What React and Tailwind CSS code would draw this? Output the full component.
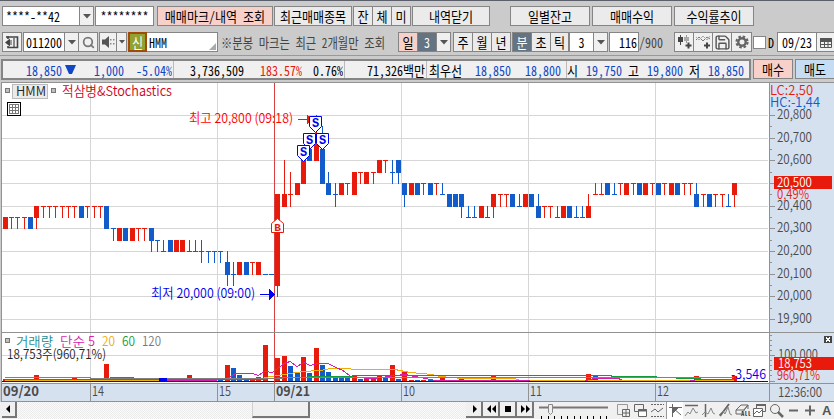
import { Search, Save } from "lucide-react";
import clsx from "clsx";

const RED = "#e81a0c";
const BLUE = "#125bcb";

// [color, top, bottom, high, low], prices as offset from 20,000
const r = (top, bottom, high = top, low = bottom) => [RED, top, bottom, high, low];
const b = (top, bottom, high = top, low = bottom) => [BLUE, top, bottom, high, low];

const CANDLES = [
  r(350, 300), r(350, 350, 350, 300), r(350, 350, 350, 300), r(350, 350, 350, 300), b(350, 300),
  r(400, 350, 400, 300), r(400, 400, 400, 350), r(400, 400, 400, 350), r(400, 400, 400, 350), r(400, 400, 400, 350),
  r(400, 400, 400, 350), r(400, 400, 400, 350), b(400, 350), r(400, 400, 400, 350), r(400, 400, 400, 350),
  r(400, 400, 400, 350), b(400, 300), b(300, 300, 300, 250), r(300, 250), b(300, 250),
  r(300, 250), r(300, 300, 300, 250), r(300, 300, 300, 250), b(300, 250, 300, 200), b(250, 250, 250, 200),
  b(200, 200, 250, 200), b(250, 200), r(250, 200), r(250, 200), b(200, 200, 250, 200),
  b(200, 200, 250, 200), b(200, 200, 250, 150), b(200, 200, 200, 150), b(200, 200, 200, 150), b(200, 200, 200, 150),
  b(150, 100, 200, 50), b(100, 100, 150, 50), r(150, 100), b(150, 100), r(150, 150, 150, 100),
  r(150, 100), b(100, 100), b(100, 100), r(450, 50, 450, 0), r(450, 400, 600, 400),
  r(450, 450, 550, 400), r(500, 450), r(600, 500), b(650, 600), r(700, 600, 800, 600),
  b(650, 500, 750, 500), b(500, 450, 550, 450), b(450, 450, 500, 400), r(500, 450), r(500, 500, 500, 450),
  r(550, 450), r(550, 550, 550, 500), r(550, 500), r(550, 550, 550, 500), r(600, 550),
  r(600, 600, 600, 550), b(550, 550, 600, 500), b(600, 550, 600, 500), b(500, 450, 500, 400), r(500, 450),
  b(500, 450), r(500, 500, 500, 450), b(500, 450), r(500, 500, 500, 450), b(450, 450, 500, 450),
  b(450, 400), b(450, 400), b(450, 400, 450, 350), b(350, 350, 400, 350), b(350, 350, 400, 350),
  r(400, 350), b(350, 350, 400, 350), r(450, 400, 450, 350), r(450, 450, 450, 400), r(450, 450, 450, 400),
  b(450, 400), b(400, 400, 450, 400), r(450, 400), b(450, 400), b(400, 350, 450, 350),
  r(400, 400, 400, 350), r(400, 400, 400, 350), b(350, 350, 400, 350), r(400, 350), b(400, 350),
  b(350, 350, 400, 350), b(350, 350, 400, 350), r(400, 350, 450, 350), r(450, 450, 500, 450), r(450, 450, 500, 450),
  b(500, 450), b(450, 450, 500, 450), r(500, 500, 500, 450), r(500, 450), r(500, 500, 500, 450),
  b(500, 450), r(500, 450), r(500, 500, 500, 450), b(500, 450), r(500, 500, 500, 450),
  r(500, 450), b(500, 450), r(500, 500, 500, 450), r(500, 500, 500, 450), b(450, 400, 500, 400),
  r(450, 450, 450, 400), b(450, 400), r(450, 450, 450, 400), r(450, 450, 450, 400), b(400, 400, 450, 400),
  r(500, 450, 500, 400),
];

// tall volume bars, every other bar is one pixel high
const VOLUMES = {
  0: 2, 5: 6, 11: 3, 16: 17, 29: 6, 35: 16, 36: 13, 37: 6, 40: 4, 41: 36, 42: 0, 43: 23, 44: 25, 45: 15, 46: 9,
  47: 24, 48: 8, 49: 33, 50: 16, 51: 9, 52: 4, 53: 4, 54: 3, 55: 6, 56: 2, 57: 4, 58: 3, 59: 5, 60: 3, 61: 16,
  62: 2, 63: 10, 69: 4, 72: 4, 77: 5, 92: 7, 93: 5, 109: 5, 115: 5,
};
const RED_VOLUMES = [16, 29, 35, 40, 41, 47, 55, 57, 58, 61, 63, 69, 72, 109];
const BLUE_VOLUMES = [36, 37, 45, 46, 48, 53, 54, 56, 60, 62, 93];

const LEVELS = [800, 700, 600, 500, 400, 300, 200, 100, 0, -100];
const HOURS = [90, 217, 401, 528, 655];

const xOf = (i) => Math.floor(5.2 + 6.344 * i);
const yOf = (p) => Math.round(115 + (800 - p) * 0.2267);

function T({ x, y, w, children, fill = "#4a4a4a", size = 13.5, weight = 350 }) {
  return (
    <text x={x} y={y} textLength={w} lengthAdjust="spacingAndGlyphs" fill={fill} fontSize={size} fontWeight={weight}>
      {children}
    </text>
  );
}

function Label({ children, className }) {
  return <span className={clsx("inline-block scale-y-[1.14] whitespace-pre leading-none", className)}>{children}</span>;
}

function Box({ children, className }) {
  return (
    <div className={clsx("flex h-5 shrink-0 items-center justify-center overflow-hidden border border-[#858585] [&>svg]:shrink-0", className)}>
      {children}
    </div>
  );
}

function Drop({ className }) {
  return (
    <Box className={clsx("bg-[#f0f0f0]", className)}>
      <svg width="8" height="5" viewBox="0 0 8 5">
        <path d="M0 0h8L4 4.5z" fill="#555" />
      </svg>
    </Box>
  );
}

function AccountRow() {
  return (
    <div className="flex h-5 w-full">
      <Box className="ml-[2px] w-[78px] justify-start bg-white pl-[3px]"><Label>****-**42</Label></Box>
      <Drop className="w-[14px] border-l-0" />
      <Box className="ml-px w-[59px] bg-white"><Label>********</Label></Box>
      <Box className="ml-[3px] w-[116px] bg-[#f7d0ca]"><Label>매매마크/내역 조회</Label></Box>
      <Box className="ml-px w-[78px] bg-[#ebebeb]"><Label>최근매매종목</Label></Box>
      <Box className="ml-px w-[20px] bg-[#ebebeb]"><Label>잔</Label></Box>
      <Box className="w-[19px] border-l-0 bg-[#ebebeb]"><Label>체</Label></Box>
      <Box className="w-[19px] border-l-0 bg-[#ebebeb]"><Label>미</Label></Box>
      <Box className="ml-px w-[78px] bg-[#ebebeb]"><Label>내역닫기</Label></Box>
      <Box className="ml-[20px] w-[80px] bg-[#ebebeb]"><Label>일별잔고</Label></Box>
      <Box className="ml-[2px] w-[80px] bg-[#ebebeb]"><Label>매매수익</Label></Box>
      <Box className="ml-[2px] w-[80px] bg-[#ebebeb]"><Label>수익률추이</Label></Box>
    </div>
  );
}

function SymbolRow() {
  return (
    <div className="flex h-5 w-full items-center">
      <Box className="ml-[2px] w-[20px] bg-[#f0f0f0]">
        <svg width="14" height="14" viewBox="0 0 14 14" fill="none" stroke="#444">
          <path d="M3 4V2h9.500v10.500H3V11" strokeWidth="1.600" />
          <path d="M1 2h3" strokeWidth="1.600" />
          <path d="M9 3v9" strokeWidth="1.200" />
          <path d="M0 7.500l5-4v8z" fill="#444" stroke="none" />
          <path d="M5 5h2v5H5z" fill="#999" stroke="none" />
        </svg>
      </Box>
      <Box className="ml-px w-[42px] bg-white"><Label>011200</Label></Box>
      <Drop className="w-[14px] border-l-0" />
      <Box className="w-[19px] border-l-0 bg-[#f0f0f0]"><Search size={13} color="#777" strokeWidth={3.2} /></Box>
      <Box className="ml-px w-[18px] bg-[#f0f0f0]">
        <svg width="14" height="12" viewBox="0 0 14 12" fill="#555">
          <path d="M1 3.500h3L8 0v12L4 8.500H1z" />
          <path d="M9 3h1.500v1.500H9zM9 7h1.500v1.500H9zM12 3h1.500v1.500H12zM12 7h1.500v1.500H12z" fill="#888" />
        </svg>
      </Box>
      <Box className="w-[10px] border-l-0 bg-[#f0f0f0]">
        <svg width="6" height="4" viewBox="0 0 6 4"><path d="M0 0h6L3 3.500z" fill="#555" /></svg>
      </Box>
      <div className="ml-px flex h-5 w-[19px] shrink-0 items-center justify-center border-2 border-[#a04a0c] bg-[#93a22f] text-white">
        <Label>신</Label>
      </div>
      <Box className="relative w-[71px] justify-start border-l-0 bg-white pl-[2px]">
        <Label>HMM</Label>
        <svg className="absolute right-px bottom-px" width="7" height="7" viewBox="0 0 7 7">
          <path d="M7 0v7H0z" fill="#aaa" />
        </svg>
      </Box>
      <div className="ml-[3px] w-[177px] shrink-0 text-[#444]"><Label className="origin-left scale-x-[0.94]">※분봉 마크는 최근 2개월만 조회</Label></div>
      <Box className="w-[20px] bg-[#f7d0ca]"><Label>일</Label></Box>
      <Box className="w-[19px] border-l-0 bg-[#647483] text-white"><Label>3</Label></Box>
      <Drop className="w-[14px] border-l-0" />
      <Box className="ml-[2px] w-[20px] bg-[#ebebeb]"><Label>주</Label></Box>
      <Box className="w-[19px] border-l-0 bg-[#ebebeb]"><Label>월</Label></Box>
      <Box className="w-[19px] border-l-0 bg-[#ebebeb]"><Label>년</Label></Box>
      <Box className="ml-px w-[20px] bg-[#647483] text-white"><Label>분</Label></Box>
      <Box className="w-[19px] border-l-0 bg-[#ebebeb]"><Label>초</Label></Box>
      <Box className="w-[18px] border-l-0 bg-[#ebebeb]"><Label>틱</Label></Box>
      <Box className="w-[25px] bg-white"><Label>3</Label></Box>
      <Drop className="w-[14px] border-l-0" />
      <Box className="ml-px w-[30px] justify-end bg-white pr-px"><Label>116</Label></Box>
      <div className="w-[35px] shrink-0 text-[#444]"><Label>/900</Label></div>
      <Box className="w-[20px] bg-[#f0f0f0]">
        <svg width="15" height="14" viewBox="0 0 15 14" fill="none" stroke="#444">
          <path d="M3.500 0v10" />
          <path d="M9.500 0v8" stroke="#999" />
          <path d="M1 2h5v5H1z" fill="#444" stroke="none" />
          <path d="M7 2h5v4H7z" fill="#aaa" stroke="none" />
          <path d="M8.500 10.500h6M11.500 7.500v6" strokeWidth="2" />
        </svg>
      </Box>
      <Box className="w-[19px] border-l-0 bg-[#f0f0f0]">
        <svg width="15" height="14" viewBox="0 0 15 14" fill="none" stroke="#777">
          <path d="M0 5l3-3 4 4 4-4 3 2" />
          <path d="M0 2l3 3 4-4 4 4 3-4" stroke="#aaa" />
          <path d="M8 10.500h6M11 7.500v6" stroke="#444" strokeWidth="2" />
        </svg>
      </Box>
      <Box className="w-[19px] border-l-0 bg-[#f0f0f0]"><Save size={17} color="#555" strokeWidth={2} /></Box>
      <Box className="w-[20px] border-l-0 bg-[#f0f0f0]">
        <svg width="14" height="14" viewBox="0 0 14 14" fill="none" stroke="#666">
          <circle cx="7" cy="7" r="5.500" strokeWidth="2.200" strokeDasharray="2.500 1.820" />
          <circle cx="7" cy="7" r="3.700" strokeWidth="2.400" />
        </svg>
      </Box>
      <div className="ml-px h-[13px] w-[13px] shrink-0 border border-[#858585] bg-white" />
      <div className="ml-[2px] w-[9px] shrink-0"><Label>D</Label></div>
      <Box className="w-[40px] bg-white"><Label>09/23</Label></Box>
      <Box className="w-[19px] border-l-0 bg-[#f0f0f0]">
        <svg width="12" height="11" viewBox="0 0 12 11" fill="none" stroke="#555">
          <path d="M.5 1.500h11v9H.5zM.5 4.500h11M.5 7.500h11M4.500 4v6M8 4v6" />
          <path d="M0 1h12v3H0z" fill="#555" stroke="none" />
        </svg>
      </Box>
    </div>
  );
}

function QuoteRow() {
  return (
    <div className="flex h-[21px] w-full text-[#0f47c4]">
      <div className="ml-px flex h-full w-[750px] shrink-0 items-center border-2 border-[#858585] bg-[#f0f0f0]">
        <div className="flex w-[59px] shrink-0 justify-end"><Label>18,850</Label></div>
        <svg className="ml-[3px] shrink-0" width="11" height="10" viewBox="0 0 11 10"><path d="M0 0h11L7 9H4z" fill="#0f47c4" /></svg>
        <div className="flex w-[48px] shrink-0 justify-end"><Label>1,000</Label></div>
        <div className="flex h-full w-[50px] shrink-0 items-center justify-end border-r border-[#bbb] pr-px"><Label>-5.04%</Label></div>
        <div className="flex w-[70px] shrink-0 justify-end text-black"><Label>3,736,509</Label></div>
        <div className="flex w-[58px] shrink-0 justify-end text-[#e81a0c]"><Label>183.57%</Label></div>
        <div className="flex h-full w-[43px] shrink-0 items-center justify-end border-r border-[#bbb] pr-px text-black"><Label>0.76%</Label></div>
        <div className="flex h-full w-[82px] shrink-0 items-center justify-end border-r border-[#bbb] pr-px text-black"><Label>71,326백만</Label></div>
        <div className="w-[48px] shrink-0 pl-[2px] text-black"><Label>최우선</Label></div>
        <div className="w-[50px] shrink-0"><Label>18,850</Label></div>
        <div className="flex h-full w-[42px] shrink-0 items-center border-r border-[#bbb]"><Label>18,800</Label></div>
        <div className="w-[19px] shrink-0 text-black"><Label>시</Label></div>
        <div className="w-[42px] shrink-0"><Label>19,750</Label></div>
        <div className="w-[19px] shrink-0 text-black"><Label>고</Label></div>
        <div className="w-[42px] shrink-0"><Label>19,800</Label></div>
        <div className="w-[19px] shrink-0 text-black"><Label>저</Label></div>
        <div className="shrink-0"><Label>18,850</Label></div>
      </div>
      <div className="ml-[2px] flex h-5 w-[40px] shrink-0 items-center justify-center border border-[#858585] bg-[#f7d0ca] text-black"><Label>매수</Label></div>
      <div className="ml-[2px] flex h-5 w-[40px] shrink-0 items-center justify-center border border-[#858585] bg-[#c5dcf2] text-black"><Label>매도</Label></div>
    </div>
  );
}

function SellMark({ x, y }) {
  return (
    <g>
      <path d={`M${x - 6} ${y}h12v10l-6 6l-6 -6z`} fill="#fff" stroke="#0000f0" />
      <text x={x} y={y + 10.5} textAnchor="middle" fontSize="12" fontWeight="700" fill="#0000f0" fontFamily="Liberation Mono, monospace">S</text>
    </g>
  );
}

function Chart() {
  return (
    <svg className="block shrink-0" width="834" height="322" viewBox="0 80 834 322" shapeRendering="crispEdges">
      <rect x="0" y="80" width="834" height="322" fill="#cbcbcb" />
      <rect x="1" y="82" width="769" height="302" fill="#fff" />
      <rect x="770" y="82" width="64" height="320" fill="#d6e1ef" />
      <rect x="1" y="384" width="833" height="18" fill="#d6e1ef" />

      {/* grid */}
      <g fill="#d6d6d6">
        {LEVELS.map((p) => <rect key={p} x="2" y={yOf(p)} width="766" height="1" />)}
        <rect x="2" y="355" width="766" height="1" />
        {HOURS.map((x) => <rect key={x} x={x} y="83" width="1" height="300" />)}
      </g>

      {/* volume */}
      {CANDLES.map((c, i) => {
        const h = VOLUMES[i] ?? 1;
        let fill = c[0];
        if (RED_VOLUMES.includes(i)) fill = RED;
        if (BLUE_VOLUMES.includes(i)) fill = BLUE;
        return <rect key={i} x={xOf(i) - 2} y={381 - h} width="5" height={h} fill={fill} />;
      })}
      <g fill="none" strokeWidth="1">
        <path d="M5 380.500H180V379.500H260L265 377.500 278 375.500 290 373.500 303 371.500 320 370.500 331 368.500H350L352 369.500H395L410 372.500 432 374.500 440 376.500 463 378.500H515L520 380.500H734" stroke="#f0ac00" />
        <path d="M85 379.500H110V377.500H133V379.500H160V380.500H215L229 377.500 236 373.500H253L258 375.500 265 371.500 272 372.500 279 367.500 284 363.500 290 361.500 297 366.500 304 362.500 310 365.500 318 363.500H328L336 367.500 343 370.500 352 377.500 375 378.500 395 375.500 405 374.500 420 377.500 436 380.500H530M585 380.500L595 378.500H617L622 379.500M690 380.500L700 379.500" stroke="#d91cb0" />
        <path d="M5 379.500H262L282 377.500H305L312 376.500H350L355 375.500H611V376.500H656V377.500H676V378.500H700V379.500H734" stroke="#119b3b" />
        <path d="M5 377.500H90V378.500H282V377.500H734" stroke="#808080" />
      </g>
      <rect x="159" y="378" width="8" height="4" fill="#0000f0" />
      <rect x="2" y="381" width="766" height="1" fill="#0000f0" />

      {/* candles */}
      {CANDLES.map(([fill, top, bottom, high, low], i) => (
        <g key={i} fill={fill}>
          <rect x={xOf(i)} y={yOf(high)} width="1" height={yOf(low) - yOf(high) + 1} />
          <rect x={xOf(i) - 2} y={yOf(top)} width="5" height={yOf(bottom) - yOf(top) + 1} />
        </g>
      ))}
      <rect x="274" y="83" width="1" height="301" fill="#d84040" />

      {/* frame */}
      <g fill="#929292">
        <rect x="1" y="82" width="833" height="1" />
        <rect x="1" y="82" width="1" height="320" />
        <rect x="769" y="82" width="1" height="320" />
        <rect x="1" y="332" width="833" height="1" />
        <rect x="1" y="383" width="833" height="1" />
        <rect x="1" y="401" width="833" height="1" />
        {[90, 217, 274, 401, 528, 655].map((x) => <rect key={x} x={x} y="384" width="1" height="17" />)}
        {LEVELS.map((p) => <rect key={p} x="770" y={yOf(p)} width="5" height="1" />)}
        {LEVELS.slice(0, -1).map((p) => <rect key={p} x="770" y={yOf(p - 50)} width="2" height="1" />)}
        {[335, 340, 345, 350, 360, 365, 370, 375].map((y) => <rect key={y} x="770" y={y} width="2" height="1" />)}
        <rect x="770" y="355" width="5" height="1" />
        <rect x="770" y="381" width="5" height="1" />
      </g>

      {/* trade marks */}
      <rect x="298" y="119" width="10" height="1" fill={RED} />
      <path d="M307 114l5 5.500l-5 5.500z" fill={RED} />
      <rect x="260" y="294" width="10" height="1" fill="#0000f0" />
      <path d="M269 289l6 5.500l-6 5.500z" fill="#0000f0" />
      <g shapeRendering="auto">
        <SellMark x={309.5} y={133.5} />
        <SellMark x={322.5} y={133.5} />
        <SellMark x={315.5} y={116.5} />
        <SellMark x={303.5} y={145.5} />
        <path d="M277.500 218.500l6 5v9h-12v-9z" fill="#fff" stroke={RED} />
        <text x="277.500" y="231" textAnchor="middle" fontSize="11" fontWeight="700" fill={RED} fontFamily="Liberation Mono, monospace">B</text>
      </g>

      {/* legend */}
      <g fill="#c0c0c0" stroke="#777">
        <rect x="5.500" y="88.500" width="4" height="4" />
        <rect x="51.500" y="88.500" width="4" height="4" />
        <rect x="5.500" y="338.500" width="4" height="4" />
      </g>
      <rect x="12.500" y="84.500" width="35" height="14" fill="#ebebeb" stroke="#bbb" />
      <T x={16} y={96} w={30} fill="#222">HMM</T>
      <T x={62} y={96} w={110} fill="#d0021b">적삼병&amp;Stochastics</T>
      <g>
        <rect x="7.500" y="102.500" width="13" height="13" fill="#fff" stroke="#000" />
        <path d="M9.500 104.500h9v9h-9zM9.500 107.500h9M9.500 110.500h9M12.500 104.500v9M15.500 104.500v9" fill="none" stroke="#777" />
      </g>
      <T x={189} y={122.5} w={104} fill="#ff0000">최고 20,800 (09:18)</T>
      <T x={151} y={298} w={104} fill="#0000f0">최저 20,000 (09:00)</T>
      <T x={16} y={346} w={37} fill="#1f8f93" size={13}>거래량</T>
      <T x={60} y={346} w={25} fill="#d91cb0" size={13}>단순</T>
      <T x={88} y={346} w={7} fill="#d91cb0" size={13}>5</T>
      <T x={102} y={346} w={13} fill="#f0ac00" size={13}>20</T>
      <T x={122} y={346} w={13} fill="#119b3b" size={13}>60</T>
      <T x={142} y={346} w={19} fill="#777" size={13}>120</T>
      <T x={7} y={359} w={99} fill="#222" size={13}>18,753주(960,71%)</T>
      <T x={731} y={378.5} w={35} fill="#0000f0">-3,546</T>

      {/* price axis */}
      <T x={770} y={95} w={43} fill={RED}>LC:2,50</T>
      <T x={770} y={107} w={50} fill={BLUE}>HC:-1,44</T>
      {LEVELS.map((p) => (
        <T key={p} x={777} y={yOf(p) + 4} w={35}>{(20000 + p).toLocaleString("en-US")}</T>
      ))}
      <rect x="774" y="189" width="58" height="11" fill="#d6e1ef" />
      <rect x="774" y="176" width="58" height="13" fill={RED} />
      <T x={777} y={187} w={35} fill="#fff">20,500</T>
      <T x={777} y={199} w={32} fill={RED}>0,49%</T>
      <T x={778} y={359} w={40}>100,000</T>
      <rect x="774" y="357" width="60" height="13" fill={RED} />
      <T x={778} y={368} w={34} fill="#fff">18,753</T>
      <T x={777} y={380} w={43} fill={RED}>960,71%</T>
      <rect x="824" y="336" width="8" height="7" fill="#444" />
      <path d="M826 337.500l4 4M830 337.500l-4 4" stroke="#fff" />

      {/* time axis */}
      <T x={3} y={396} w={36} weight={700}>09/20</T>
      <T x={92} y={396} w={12}>14</T>
      <T x={219} y={396} w={12}>15</T>
      <T x={276} y={396} w={34} weight={700}>09/21</T>
      <T x={403} y={396} w={12}>10</T>
      <T x={530} y={396} w={12}>11</T>
      <T x={657} y={396} w={12}>12</T>
      <T x={778} y={396.5} w={44}>12:36:00</T>
    </svg>
  );
}

function Key({ d, className }) {
  return (
    <div className={clsx("flex h-4 shrink-0 items-center justify-center border-r-2 border-b-2 border-[#777] bg-[#f0f0f0]", className)}>
      <svg width="10" height="8" viewBox="0 0 10 8"><path d={d} fill="#000" /></svg>
    </div>
  );
}

function Tool({ children, active }) {
  return (
    <div className={clsx("flex h-[17px] w-[17px] shrink-0 items-center justify-center", active && "border-l border-[#999] bg-white")}>
      <svg className="overflow-visible" width="15" height="15" viewBox="0 0 15 15" fill="none" stroke="#666">{children}</svg>
    </div>
  );
}

function BottomBar() {
  return (
    <div className="flex h-[17px] w-full bg-[#f0f0f0] pl-[2px]">
      <Key className="w-[15px]" d="M6 0v8L2 4z" />
      <div className="h-full w-[235px] shrink-0 bg-[repeating-conic-gradient(#ececec_0_25%,#fafafa_0_50%)] bg-[length:2px_2px]" />
      <div className="h-4 w-[58px] shrink-0 border-r-2 border-b-2 border-l border-[#777] border-l-[#d0d0d0] bg-[#f0f0f0]" />
      <div className="h-full w-[156px] shrink-0 bg-[repeating-conic-gradient(#ececec_0_25%,#fafafa_0_50%)] bg-[length:2px_2px]" />
      <Key className="w-[17px]" d="M4 0v8l4-4z" />
      <Key className="w-[17px]" d="M5 0v8L1 4zM10 0v8L6 4z" />
      <Key className="w-[17px]" d="M2 1h6v6H2z" />
      <Key className="w-[17px]" d="M1 0v8l4-4zM6 0v8l4-4z" />
      <svg className="ml-[3px] shrink-0" width="78" height="17" viewBox="0 0 78 17">
        <path d="M2 5.500h69" stroke="#777" strokeWidth="2" />
        <path d="M11.500 2.500h4v8l-2 2l-2 -2z" fill="#f0f0f0" stroke="#888" />
        <path d="M4.500 14v3M11.500 14v3M17.500 14v3M24.500 14v3M30.500 14v3M37.500 14v3M43.500 14v3M50.500 14v3M56.500 14v3M63.500 14v3M69.500 14v3" stroke="#000" />
      </svg>
      <Tool><path d="M1.500 1.500h10v10h-10z" stroke="#999" /><path d="M6.500 6.500h7v7h-7zM10 6.500v7M6.500 10h7" fill="#f0f0f0" /></Tool>
      <Tool><path d="M1.500 1.500h9v7h-9z" /><path d="M5.500 6.500h8v7h-8z" fill="#fff" /><path d="M5 7.500h9" strokeWidth="2" /></Tool>
      <Tool><path d="M1 1.500h13M1 13.500h13" strokeDasharray="2 1" /><path d="M1 9l4-3 3 3 5-4" /></Tool>
      <Tool active><path d="M1 4.500h13M4.500 1v13M5 5l8 7" /><path d="M5 5h5l-5 5z" fill="#666" /></Tool>
      <Tool><path d="M1 2.500h13" strokeWidth="1.500" /><path d="M1 13l3-4 2 2 3-6 3 5 2-1" stroke="#888" /></Tool>
      <Tool><path d="M4.500 1v13" strokeWidth="1.500" /><path d="M1 12l3-3 3 2 3-6 2 5 2 1" stroke="#888" /></Tool>
      <Tool><path d="M2 13L11 1" strokeWidth="1.800" /><path d="M1 12l4-4 2 3 3-7 2 7 2 1" stroke="#888" /></Tool>
      <Tool>
        <path d="M1 7l5-5h7l-4 5zM1 7v4h5M9 7l4-5v4M9 7v1" />
        <text x="6" y="13" fontSize="6.500" fontWeight="700" fill="#333" stroke="none">All</text>
      </Tool>
      <Tool><path d="M4.500 1.500h9v7h-9z" /><path d="M1.500 5.500h9v8h-9z" fill="#fff" /><path d="M2 11l3-3 2 2 3-3" /><path d="M4 2h10" strokeWidth="2" /></Tool>
      <Tool><circle cx="6" cy="6" r="4.500" /><path d="M9 9l5 5" strokeWidth="2.500" /></Tool>
      <Tool><path d="M3 7.500h9" strokeWidth="2" /></Tool>
      <Tool><path d="M2 7.500h10M7 2.500v10" strokeWidth="2" /></Tool>
      <Tool>
        <text x="2" y="12" fontSize="13" fontWeight="700" fill="#555" stroke="none" fontFamily="Liberation Sans, sans-serif">A</text>
      </Tool>
    </div>
  );
}

export default function App() {
  return (
    <div className="flex h-[419px] w-[834px] flex-col overflow-hidden bg-[#cbcbcb] font-['Noto_Sans_Mono_CJK_KR','Noto_Sans_CJK_KR',sans-serif] text-[12px] text-black">
      <div className="h-px shrink-0 bg-[#5a5f6b]" />
      <div className="shrink-0 pt-[5px]"><AccountRow /></div>
      <div className="shrink-0 pt-[6px]"><SymbolRow /></div>
      <div className="mt-[3px] h-px shrink-0 bg-[#999]" />
      <div className="h-[24px] shrink-0 pt-[3px]"><QuoteRow /></div>
      <div className="shrink-0 font-['Noto_Sans_CJK_KR',sans-serif]"><Chart /></div>
      <BottomBar />
    </div>
  );
}
